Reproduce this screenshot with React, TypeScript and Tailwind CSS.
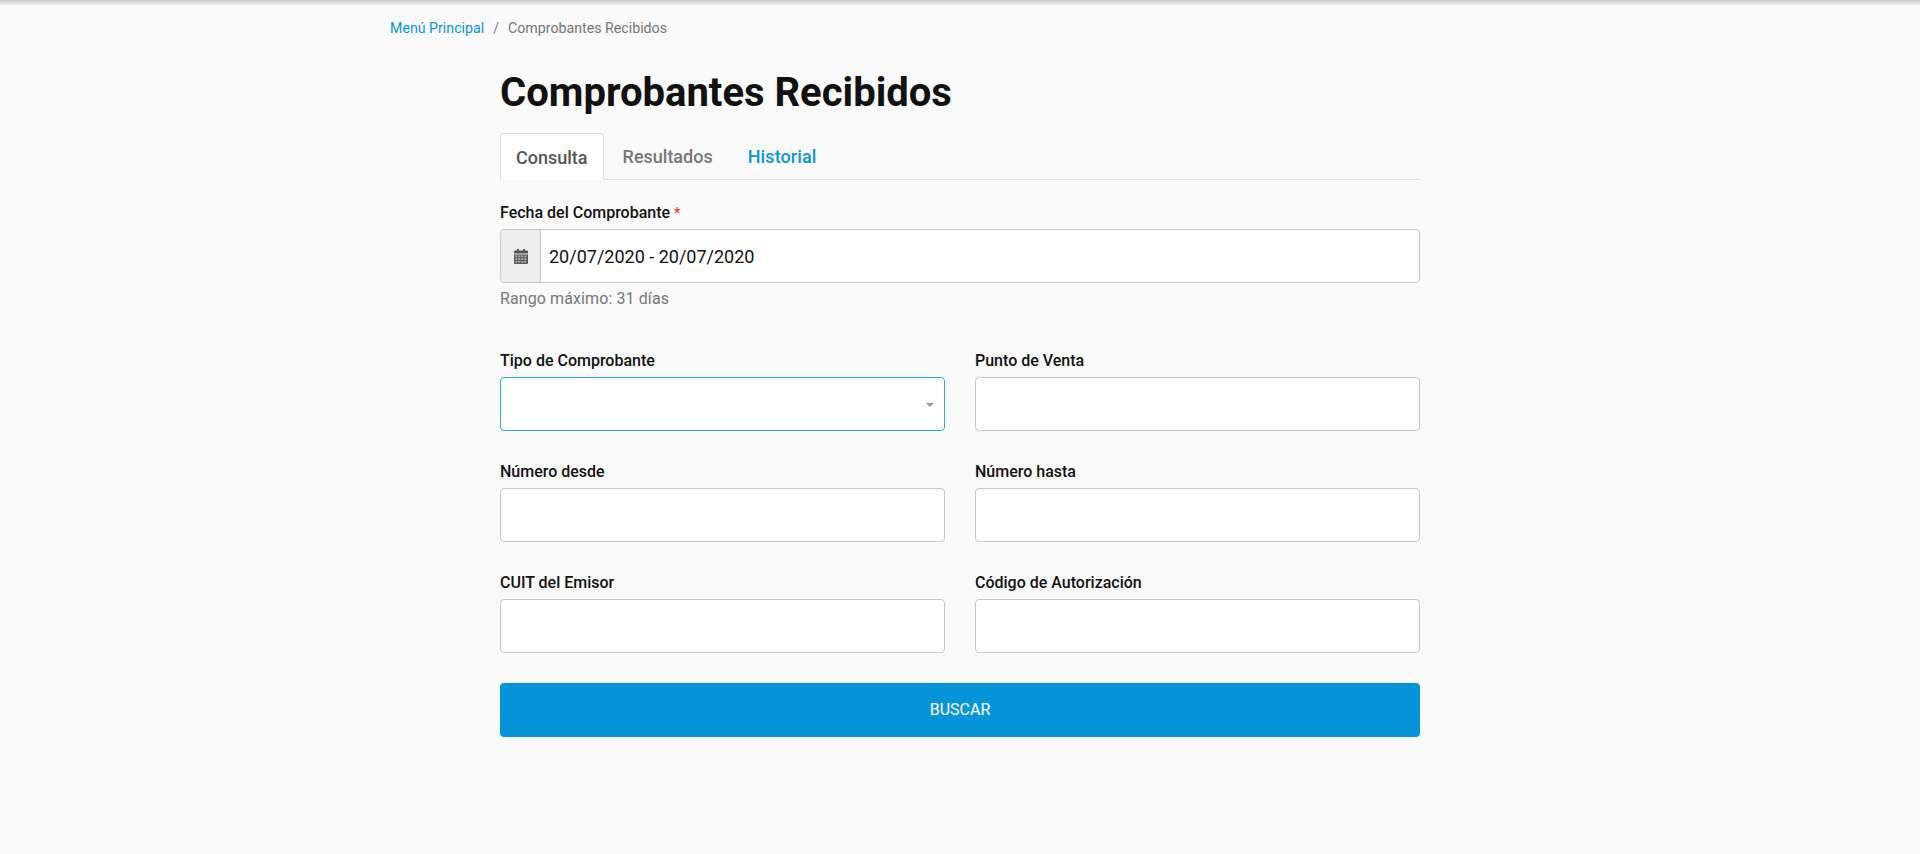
function CalendarIcon() {
  const holes = [0, 1, 2, 3].flatMap((col) => [0, 1, 2].map((row) => [col, row]))
  return (
    <svg width="14" height="15" viewBox="0 0 14 15" className="text-[#555]">
      <path fill="currentColor" d="M3 0h2v1.5h4V0h2v1.5h2a1 1 0 0 1 1 1V4.500H0V2.500a1 1 0 0 1 1-1h2z" />
      <path fill="currentColor" d="M0 5.500h14V14a1 1 0 0 1-1 1H1a1 1 0 0 1-1-1z" />
      {holes.map(([col, row]) => (
        <rect key={`${col}-${row}`} x={1.2 + col * 3} y={6.5 + row * 2.7} width="2.2" height="1.8" fill="#eeeeee" opacity="0.55" />
      ))}
    </svg>
  )
}

function Field({ label, select, focused }: { label: string; select?: boolean; focused?: boolean }) {
  return (
    <div className="min-w-0 flex-1">
      <label className="block h-[20px] text-[16px] leading-[20px] font-medium text-[#111]">{label}</label>
      <div
        className={`relative mt-[6px] h-[54px] rounded-[4px] border bg-white ${
          focused ? "border-[#28aaeb]" : "border-[#c7c7c7]"
        }`}
      >
        {select && (
          <span className="absolute top-[25px] right-[10px] h-0 w-0 border-x-[4px] border-t-[4px] border-x-transparent border-t-[#999]"></span>
        )}
      </div>
    </div>
  )
}

export default function App() {
  return (
    <div className="min-h-[854px] bg-[#fafafa] font-['Roboto',sans-serif] text-[#111]">
      <div className="h-[6px] bg-gradient-to-b from-[#c8c8c8] to-[#fafafa]"></div>
      <div className="mx-auto w-[1170px] px-[15px]">
        <nav className="mt-[12px] flex h-[20px] items-center text-[14.2px] leading-[20px]">
          <a className="text-[#0795d9]">Menú Principal</a>
          <span className="px-[9px] text-[#767676]">/</span>
          <span className="text-[#767676]">Comprobantes Recibidos</span>
        </nav>

        <main className="mx-[110px]">
          <h1 className="mt-[32px] h-[46px] text-[40px] leading-[46px] font-bold text-[#111]">Comprobantes Recibidos</h1>

          <div className="mt-[17px] flex h-[47px] border-b border-[#dddddd] text-[18px] font-medium">
            <button className="-mb-px h-[47px] rounded-t-[4px] border border-b-0 border-[#dddddd] bg-white px-[15px] text-[#555]">
              Consulta
            </button>
            <button className="h-[46px] px-[19px] text-[#767676]">Resultados</button>
            <button className="h-[46px] pr-[17px] pl-[16px] tracking-[0.1px] text-[#0795d9]">Historial</button>
          </div>

          <form>
            <label className="mt-[23px] block h-[20px] text-[16px] leading-[20px] font-medium">
              Fecha del Comprobante <span className="text-[14px] text-[#f0392b]">*</span>
            </label>
            <div className="mt-[6px] flex h-[54px] overflow-hidden rounded-[4px] border border-[#c7c7c7] bg-white">
              <span className="flex w-[40px] items-center justify-center border-r border-[#c7c7c7] bg-[#eeeeee]">
                <CalendarIcon />
              </span>
              <span className="flex items-center pl-[8px] text-[18px] text-[#111]">20/07/2020 - 20/07/2020</span>
            </div>
            <p className="mt-[6px] text-[16px] leading-[20px] tracking-[0.1px] text-[#767676]">Rango máximo: 31 días</p>

            <div className="mt-[42px] flex gap-[30px]">
              <Field label="Tipo de Comprobante" select focused />
              <Field label="Punto de Venta" />
            </div>
            <div className="mt-[31px] flex gap-[30px]">
              <Field label="Número desde" />
              <Field label="Número hasta" />
            </div>
            <div className="mt-[31px] flex gap-[30px]">
              <Field label="CUIT del Emisor" />
              <Field label="Código de Autorización" />
            </div>

            <button className="mt-[30px] block h-[54px] w-full rounded-[4px] bg-[#0795d9] text-[16px] text-white">
              BUSCAR
            </button>
          </form>
        </main>
      </div>
    </div>
  )
}
